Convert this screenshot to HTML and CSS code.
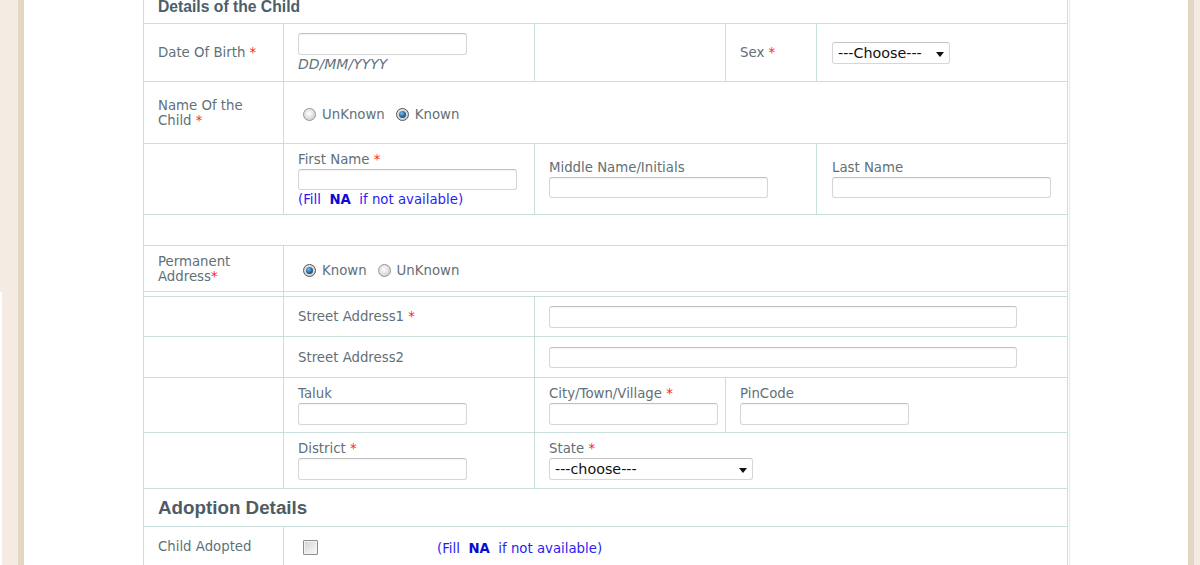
FILE: index.html
```html
<!DOCTYPE html>
<html lang="en">
<head>
<meta charset="utf-8">
<title>Details of the Child</title>
<link rel="stylesheet" href="styles.css">
</head>
<body>
<div class="page">
  <div class="edge-l"></div>
  <div class="edge-d"></div>
  <main class="sheet">
    <div class="tbl">
      <div class="row r-head"><h2 class="title">Details of the Child</h2></div>

      <div class="row r-dob">
        <div class="cell lab"><div>Date Of Birth <span class="req">*</span></div></div>
        <div class="cell c2"><div class="inp w169"></div><div class="hint">DD/MM/YYYY</div></div>
        <div class="cell c2"></div>
        <div class="cell c2"><div>Sex <span class="req">*</span></div></div>
        <div class="cell c2 c-sel"><div class="sel w118"><span>---Choose---</span><i class="arrow"></i></div></div>
      </div>

      <div class="row r-name">
        <div class="cell lab"><div>Name Of the Child <span class="req">*</span></div></div>
        <div class="cell c2">
          <div class="radios down">
            <span class="radio"></span><span class="rtext">UnKnown</span>
            <span class="radio on"></span><span class="rtext">Known</span>
          </div>
        </div>
      </div>

      <div class="row r-names">
        <div class="cell lab"></div>
        <div class="cell c2">
          <div class="flabel">First Name <span class="req">*</span></div>
          <div class="inp w219 h21"></div>
          <div class="fill">(Fill&nbsp; <b>NA</b>&nbsp; if not available)</div>
        </div>
        <div class="cell c2">
          <div class="flabel">Middle Name/Initials</div>
          <div class="inp w219 h21"></div>
        </div>
        <div class="cell c2 c-last">
          <div class="flabel">Last Name</div>
          <div class="inp w219 h21"></div>
        </div>
      </div>

      <div class="row r-empty"></div>

      <div class="row r-perm">
        <div class="cell lab"><div>Permanent Address<span class="req">*</span></div></div>
        <div class="cell c2">
          <div class="radios down2">
            <span class="radio on"></span><span class="rtext">Known</span>
            <span class="radio"></span><span class="rtext">UnKnown</span>
          </div>
        </div>
      </div>

      <div class="row r-gap"><div class="cell"></div><div class="cell c2"></div></div>

      <div class="row r-addr h40">
        <div class="cell lab"></div>
        <div class="cell c2"><div>Street Address1 <span class="req">*</span></div></div>
        <div class="cell c2"><div class="inp w468"></div></div>
      </div>

      <div class="row r-addr h41">
        <div class="cell lab"></div>
        <div class="cell c2"><div>Street Address2</div></div>
        <div class="cell c2"><div class="inp w468 h21"></div></div>
      </div>

      <div class="row r-taluk">
        <div class="cell lab"></div>
        <div class="cell c2"><div class="flabel">Taluk</div><div class="inp w169"></div></div>
        <div class="cell c2"><div class="flabel">City/Town/Village <span class="req">*</span></div><div class="inp w169"></div></div>
        <div class="cell c2"><div class="flabel">PinCode</div><div class="inp w169"></div></div>
      </div>

      <div class="row r-addr h56">
        <div class="cell lab"></div>
        <div class="cell c2"><div class="flabel">District <span class="req">*</span></div><div class="inp w169"></div></div>
        <div class="cell c2"><div class="flabel">State <span class="req">*</span></div><div class="sel w204"><span>---choose---</span><i class="arrow"></i></div></div>
      </div>

      <div class="row r-head2"><h2 class="title2">Adoption Details</h2></div>

      <div class="row r-child">
        <div class="cell lab"><div>Child Adopted</div></div>
        <div class="cell c2">
          <div class="adopt"><span class="check"></span><span class="fill">(Fill&nbsp; <b>NA</b>&nbsp; if not available)</span></div>
        </div>
      </div>
    </div>
  </main>
  <div class="edge-d"></div>
  <div class="edge-r"></div>
</div>
</body>
</html>
```

FILE: styles.css
```css
* { box-sizing: border-box; }
html, body { margin: 0; padding: 0; }
body {
  width: 1200px;
  height: 565px;
  overflow: hidden;
  font-family: "DejaVu Sans", Verdana, sans-serif;
  font-size: 13.3px;
  color: #627077;
  background: #fff;
}
.page { display: flex; height: 565px; overflow: hidden; }
.edge-l {
  width: 18px;
  background: linear-gradient(90deg, #fff 2px, #f4ece2 2px) 0 292px / 100% 100% no-repeat, #f4ece2;
}
.edge-d { width: 6px; background: #e3d6c3; }
.edge-r { width: 6px; background: #f4ece2; }
.sheet { flex: 1; background: #fff; }

.tbl {
  width: 925px;
  margin-left: 119px;
  border-left: 1px solid #c9dfdc;
  border-right: 1px solid #c9dfdc;
  box-shadow: 1px 0 0 #fff, 2px 0 0 #e3ecec;
  height: 565px;
  overflow: hidden;
}
.row {
  display: grid;
  border-bottom: 1px solid #c9dfdc;
}
.cell {
  display: flex;
  flex-direction: column;
  justify-content: center;
  padding: 0 14px;
  line-height: 15px;
  min-width: 0;
}
.c2 { border-left: 1px solid #c9dfdc; }
.lab { padding-right: 20px; }
.req { color: #ff1f1f; }

.r-head { height: 24px; grid-template-columns: 1fr; }
.title {
  margin: -1px 0 0 14px;
  font-family: "Liberation Sans", Arial, sans-serif;
  font-weight: bold;
  font-size: 15.7px;
  line-height: 16px;
  color: #4b5e69;
}
.r-head2 { height: 38px; grid-template-columns: 1fr; align-items: center; }
.title2 {
  margin: 0 0 0 14px;
  font-family: "Liberation Sans", Arial, sans-serif;
  font-weight: bold;
  font-size: 18.8px;
  line-height: 22px;
  color: #4e5c64;
}

.r-dob { height: 58px; grid-template-columns: 139px 251px 191px 91px 251px; }
.c-sel { padding-left: 15px; }
.r-name { height: 62px; grid-template-columns: 139px 1fr; }
.r-names { height: 71px; grid-template-columns: 139px 251px 282px 251px; }
.c-last { padding-left: 15px; }
.r-empty { height: 31px; }
.r-perm { height: 46px; grid-template-columns: 139px 1fr; }
.r-gap { height: 5px; grid-template-columns: 139px 1fr; }
.r-addr { grid-template-columns: 139px 251px 1fr; }
.h40 { height: 40px; }
.h41 { height: 41px; }
.h56 { height: 56px; }
.r-taluk { height: 55px; grid-template-columns: 139px 251px 191px 1fr; }
.r-child { height: 38px; grid-template-columns: 139px 1fr; border-bottom: 0; }
.r-child .cell { justify-content: flex-start; padding-top: 12px; }

.inp {
  height: 22px;
  background: #fff;
  border: 1px solid #d6d6d6;
  border-top-color: #c0c0c0;
  border-radius: 3px;
  box-shadow: inset 0 1px 1px rgba(0,0,0,0.04);
  flex: none;
}
.h21 { height: 21px; }
.w169 { width: 169px; }
.w219 { width: 219px; }
.w468 { width: 468px; }
.w118 { width: 118px; }
.w204 { width: 204px; }

.hint {
  font-style: italic;
  font-size: 14px;
  line-height: 18px;
  color: #627280;
}
.flabel { line-height: 15px; margin-bottom: 2px; }
.fill {
  color: #2a1cf2;
  line-height: 15px;
  margin-top: 2px;
}
.fill b { color: #0a0ad0; }

.sel {
  position: relative;
  height: 22px;
  border: 1px solid #d6d6d6;
  border-top-color: #c4c4c4;
  border-radius: 3px;
  background: #fff;
  color: #111;
  font-size: 14.3px;
  line-height: 20px;
  padding-left: 5px;
  white-space: nowrap;
  flex: none;
}
.arrow {
  position: absolute;
  right: 5px;
  top: 9px;
  width: 0;
  height: 0;
  border-left: 4px solid transparent;
  border-right: 4px solid transparent;
  border-top: 5px solid #111;
}

.radios { display: flex; align-items: center; }
.down { margin-top: 4px; }
.down2 { margin-top: 3px; }
.radio {
  position: relative;
  width: 13px;
  height: 13px;
  margin-left: 5px;
  border-radius: 50%;
  border: 1px solid #949494;
  background: radial-gradient(circle at 45% 40%, #ffffff 0, #e4e4e4 45%, #c2c2c2 100%);
  flex: none;
}
.radio + .rtext { margin-left: 6px; }
.rtext + .radio { margin-left: 11px; }
.radio.on { border-color: #555; background: radial-gradient(circle at 45% 40%, #f4f4f4 0, #d2d2d2 70%, #b4b4b4 100%); }
.radio.on::after {
  content: "";
  position: absolute;
  left: 2px;
  top: 2px;
  width: 7px;
  height: 7px;
  border-radius: 50%;
  background: radial-gradient(circle at 40% 35%, #7fc3ee 0, #2a6fa6 45%, #0e3557 100%);
}

.adopt { display: flex; align-items: center; }
.check {
  width: 15px;
  height: 15px;
  margin-left: 5px;
  border: 1px solid #8e8e8e;
  border-radius: 1px;
  background: linear-gradient(135deg, #d2d2d2 0, #ececec 60%, #f7f7f7 100%);
  box-shadow: inset 0 0 0 1px #f2f2f2;
  flex: none;
}
.adopt .fill { margin: 2px 0 0 119px; }
```
